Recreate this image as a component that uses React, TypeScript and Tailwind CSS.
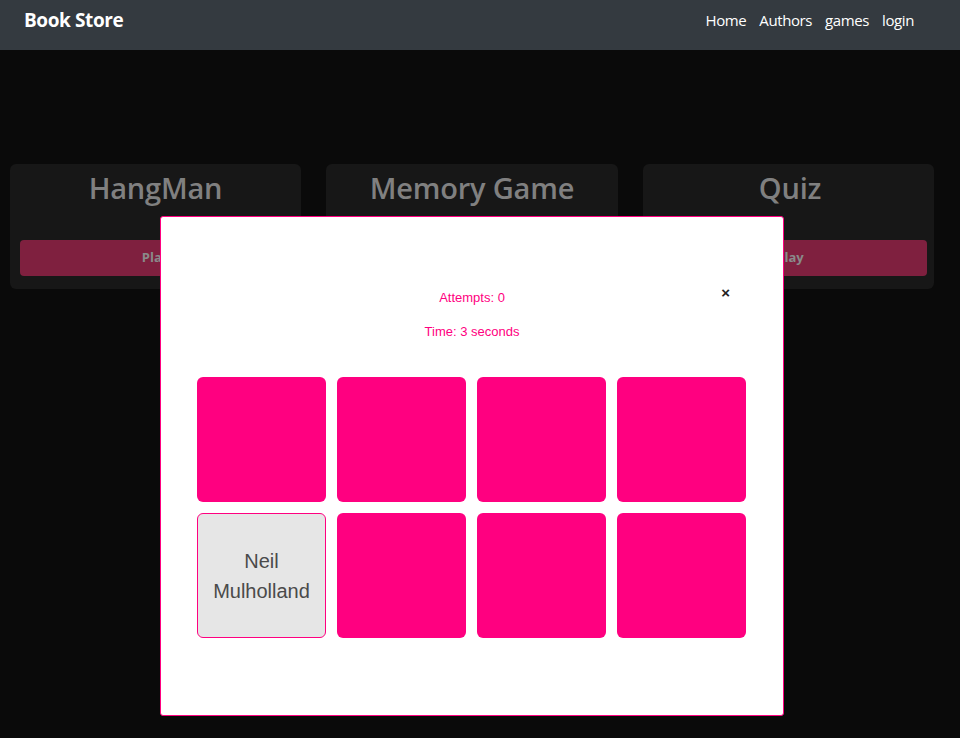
const games = ['HangMan', 'Memory Game', 'Quiz'];

const cards = [false, false, false, false, true, false, false, false];

const Navbar = () => {
  return (
    <nav className="h-[50px] bg-[#343a40] flex items-center justify-between pl-6 pr-[46px] pb-[10px]">
      <a className="text-white text-[19px] font-bold tracking-[-0.4px]">Book Store</a>
      <div className="flex gap-[13px] text-white text-[15px] tracking-[-0.4px]">
        {['Home', 'Authors', 'games', 'login'].map((item) => (
          <a key={item}>{item}</a>
        ))}
      </div>
    </nav>
  );
};

const GameCard = ({ title, last }: { title: string; last?: boolean }) => {
  return (
    <div className={last ? 'bg-[#171717] rounded-md h-[125px] pl-[10px] pr-[7px] pt-[5px] flex flex-col items-center' : 'bg-[#171717] rounded-md h-[125px] px-[10px] pt-[5px] flex flex-col items-center'}>
      <h2 className="text-[#808080] text-[29px] font-semibold leading-[38px] tracking-[-0.2px]">{title}</h2>
      <button className="mt-[33px] w-full h-[36px] rounded bg-[#7f203f] text-[#8a8a8a] text-[13px] font-bold">
        Play
      </button>
    </div>
  );
};

const MemoryModal = () => {
  return (
    <div className="absolute left-[160px] top-[216px] w-[624px] h-[500px] bg-white border border-[#ff0080] rounded-[3px] px-[36px]">
      <div className="relative pt-[72px] text-center text-[13px] text-[#ff0080] font-['Liberation_Sans',Arial,sans-serif]">
        <p className="leading-[18px]">Attempts: 0</p>
        <p className="leading-[18px] mt-[16px]">Time: 3 seconds</p>
        <button className="absolute right-[17px] top-[68px] text-[#222] text-[15px] font-bold leading-none">×</button>
      </div>
      <div className="grid grid-cols-4 gap-x-[11px] gap-y-[11px] mt-[36px] pr-px">
        {cards.map((open, i) =>
          open ? (
            <div
              key={i}
              className="h-[125px] rounded-md bg-[#e6e6e6] border border-[#ff0080] flex items-center justify-center text-center text-[20px] leading-[30px] text-[#4a4a4a] font-['Liberation_Sans',Arial,sans-serif]"
            >
              Neil
              <br />
              Mulholland
            </div>
          ) : (
            <div key={i} className="h-[125px] rounded-md bg-[#ff0080]" />
          )
        )}
      </div>
    </div>
  );
};

export default function App() {
  return (
    <div className="relative min-h-[738px] bg-[#0a0a0a] font-['Open_Sans','Noto_Sans',sans-serif]">
      <Navbar />
      <div className="grid grid-cols-[291px_292px_291px] gap-[25px] pl-[10px] pt-[114px]">
        {games.map((g, i) => (
          <GameCard key={g} title={g} last={i === games.length - 1} />
        ))}
      </div>
      <MemoryModal />
    </div>
  );
}
